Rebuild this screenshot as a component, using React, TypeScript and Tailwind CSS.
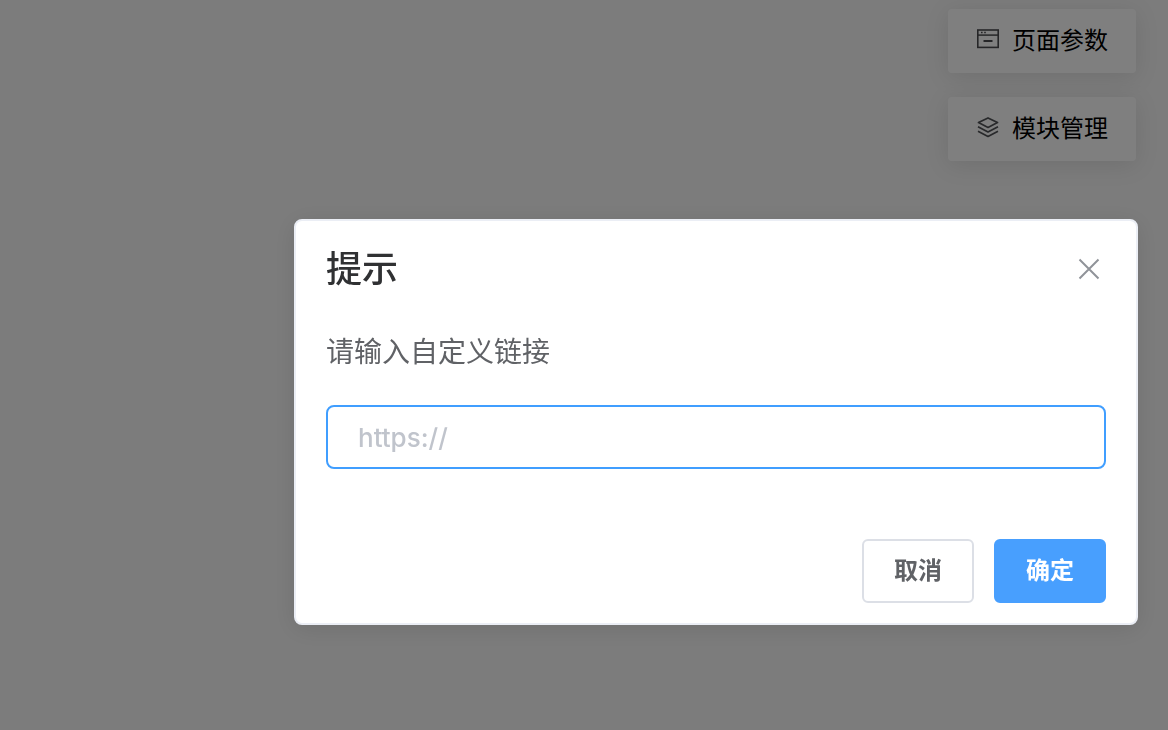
import { useState } from "react";
import type { ReactNode } from "react";

function PageIcon() {
  return (
    <svg viewBox="0 0 24 24" className="size-6 shrink-0" fill="none" stroke="#4c4d50" aria-hidden="true">
      <rect x="1.8" y="1" width="20.4" height="17.4" strokeWidth="1.6" />
      <path d="M2 6.1H22" strokeWidth="1.5" />
      <path d="M7.5 12H16.5" strokeWidth="2" />
      <path d="M5 3.5H6.6M8.2 3.5H9.8" strokeWidth="1.4" />
    </svg>
  );
}

function LayersIcon() {
  return (
    <svg
      viewBox="0 0 24 24"
      className="size-6 shrink-0"
      fill="none"
      stroke="#505256"
      strokeWidth="1.7"
      strokeLinejoin="round"
      aria-hidden="true"
    >
      <path d="M12 0.9L21.5 5.6L12 10.4L2.5 5.6Z" />
      <path d="M2 9.8L12 15L22 9.8" />
      <path d="M2 14.2L12 19.4L22 14.2" />
    </svg>
  );
}

function ToolButton({ icon, children }: { icon: ReactNode; children: ReactNode }) {
  return (
    <button
      type="button"
      className="flex h-16 items-center gap-3 rounded bg-white px-7 text-2xl text-black shadow-[0_4px_24px_rgba(0,0,0,0.1)]"
    >
      {icon}
      <span>{children}</span>
    </button>
  );
}

export default function App() {
  const [open, setOpen] = useState(true);
  const [link, setLink] = useState("");
  const close = () => setOpen(false);

  return (
    <div className="min-h-screen bg-[#f8f8f8] font-['Inter','Noto_Sans_CJK_SC',sans-serif]">
      <aside className="flex flex-col items-end gap-6 px-8 pt-[9px]">
        <ToolButton icon={<PageIcon />}>页面参数</ToolButton>
        <ToolButton icon={<LayersIcon />}>模块管理</ToolButton>
      </aside>

      {open && (
        <div className="fixed inset-0 flex items-start justify-end bg-black/50 pt-[219px] pr-[30px]">
          <form
            role="dialog"
            aria-modal="true"
            aria-labelledby="dialog-title"
            onSubmit={(event) => {
              event.preventDefault();
              close();
            }}
            className="w-full max-w-[844px] rounded-lg border-2 border-[#ebeef5] bg-white px-[30px] pt-[30px] pb-5 shadow-[0_4px_24px_rgba(0,0,0,0.1)]"
          >
            <header className="flex items-center justify-between">
              <h2 id="dialog-title" className="text-4xl leading-9 font-medium text-[#303133]">
                提示
              </h2>
              <button type="button" aria-label="关闭" onClick={close} className="mr-1">
                <svg viewBox="0 0 26 26" className="size-[26px]" fill="none" stroke="#909399" strokeWidth="2" aria-hidden="true">
                  <path d="M3.5 3.5L22.5 22.5M22.5 3.5L3.5 22.5" />
                </svg>
              </button>
            </header>

            <label htmlFor="custom-link" className="mt-10 block pt-0.5 text-[28px] leading-[46px] text-[#606266]">
              请输入自定义链接
            </label>
            <input
              id="custom-link"
              type="text"
              value={link}
              onChange={(event) => setLink(event.target.value)}
              placeholder="https://"
              className="mt-[30px] block h-16 w-full rounded-lg border-2 border-[#409eff] px-[30px] text-[26px] text-[#606266] outline-none placeholder:font-medium placeholder:text-[#c0c4cc]"
            />

            <footer className="mt-[70px] flex justify-end gap-5">
              <button
                type="button"
                onClick={close}
                className="h-16 rounded-md border-2 border-[#dcdfe6] bg-white px-[30px] text-2xl font-bold text-[#606266]"
              >
                取消
              </button>
              <button
                type="submit"
                className="h-16 rounded-md border-2 border-[#489ffe] bg-[#489ffe] px-[30px] text-2xl font-bold text-white"
              >
                确定
              </button>
            </footer>
          </form>
        </div>
      )}
    </div>
  );
}
